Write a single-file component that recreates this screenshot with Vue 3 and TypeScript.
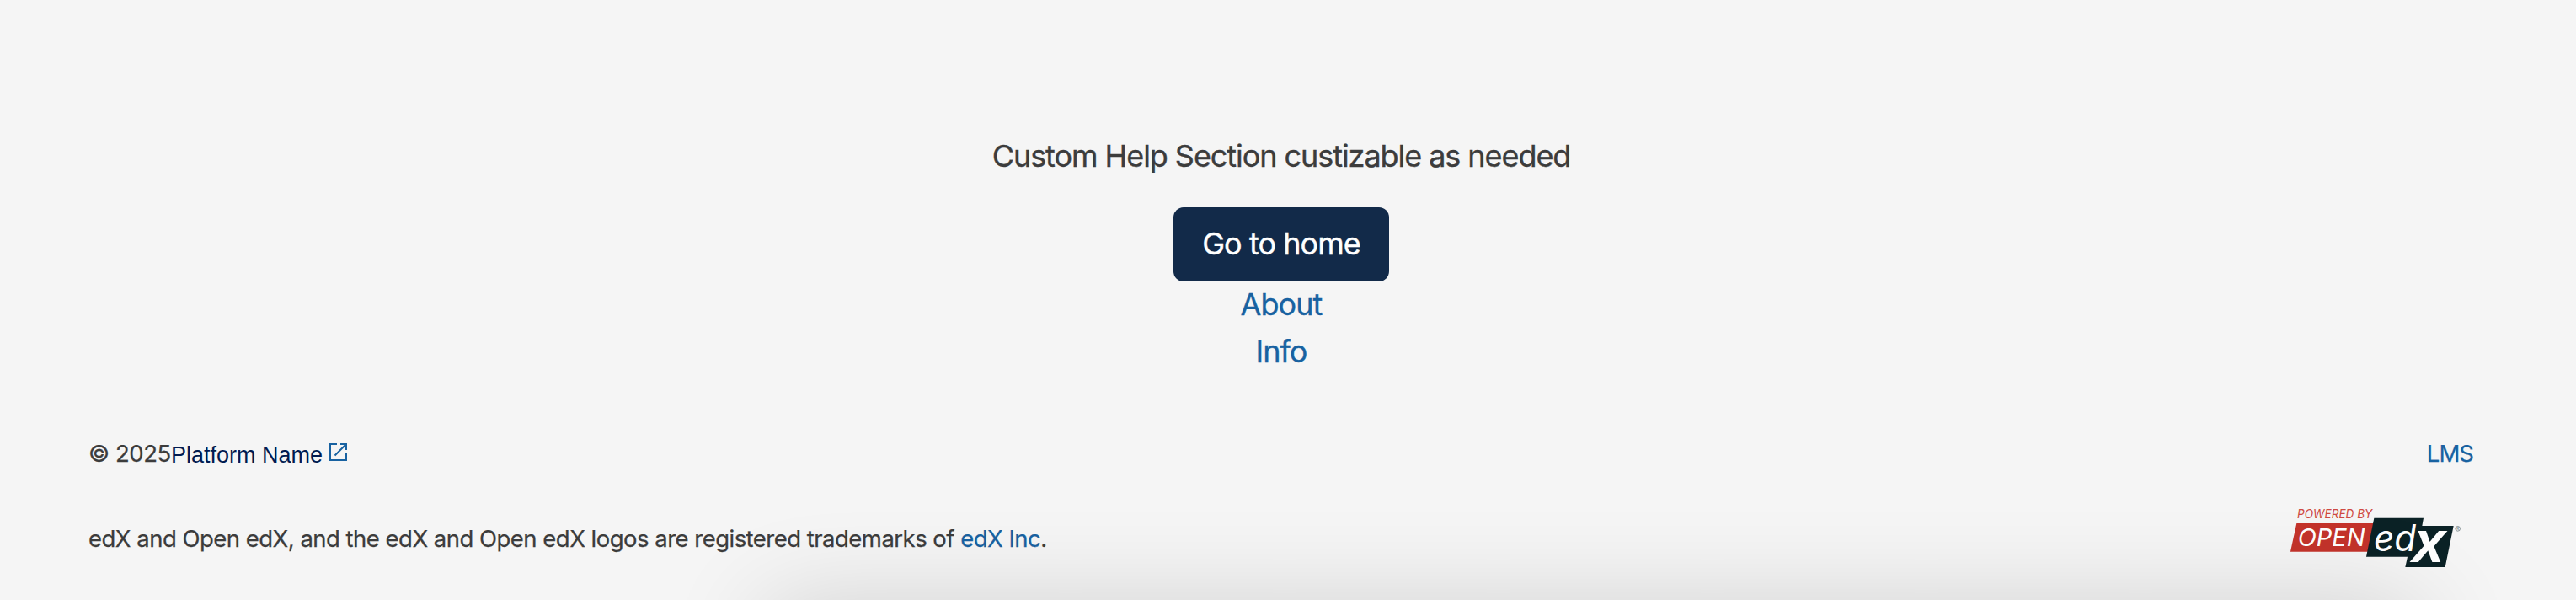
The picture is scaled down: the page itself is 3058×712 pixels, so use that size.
<script setup lang="ts">
const year = 2025
const helpLinks: string[] = ['About', 'Info']
</script>

<template>
  <div class="page">
    <section class="help">
      <p class="intro"><span>Custom Help Section custizable as needed</span></p>
      <a class="button"><span>Go to home</span></a>
      <a v-for="link in helpLinks" :key="link" class="help-link">{{ link }}</a>
    </section>
    <footer class="footer">
      <div class="row site">
        <div class="copyright">
          <span class="year">© {{ year }}</span>
          <a class="platform">Platform Name</a>
          <svg class="external" viewBox="0 0 21 21" aria-hidden="true">
            <path d="M9 1H1V20H20V12M13 1H20V8M19.5 1.5L6.5 14.5" />
          </svg>
        </div>
        <a class="lms">LMS</a>
      </div>
      <div class="row legal">
        <p class="trademark">edX and Open edX, and the edX and Open edX logos are registered trademarks of <a>edX Inc</a>.</p>
        <svg class="logo" viewBox="57 39 609 216" aria-label="Powered by Open edX">
          <text x="81" y="81" textLength="268" lengthAdjust="spacingAndGlyphs" class="powered">POWERED BY</text>
          <path d="M79 99H355L334 200H57Z" fill="#c4332b" />
          <path d="M355 80H531L526 108H638L608 255H466L474 218H327Z" fill="#0b2226" />
          <text x="83" y="181" textLength="240" lengthAdjust="spacingAndGlyphs" class="open">OPEN</text>
          <text x="354" y="198" textLength="150" lengthAdjust="spacingAndGlyphs" class="ed">ed</text>
          <text x="492" y="237" textLength="110" lengthAdjust="spacingAndGlyphs" class="x">X</text>
          <circle cx="653" cy="118" r="8.5" fill="none" stroke="#53646a" stroke-width="2" />
          <text x="648.5" y="123" class="mark">R</text>
        </svg>
      </div>
    </footer>
    <div class="shade"></div>
  </div>
</template>

<style>
body {
  margin: 0;
  background: #f5f5f5;
}
</style>

<style scoped>
.page {
  position: relative;
  box-sizing: border-box;
  width: 100%;
  height: 712px;
  padding-top: 157px;
  overflow: hidden;
  background: #f5f5f5;
  color: #3c3c3c;
  font-family: Inter, "Liberation Sans", sans-serif;
}
p {
  margin: 0;
}
a {
  color: #1862a1;
  text-decoration: none;
}
.help {
  display: flex;
  flex-direction: column;
  align-items: center;
  width: 3042px;
  font-size: 36px;
  line-height: 56px;
  -webkit-text-stroke-width: 0.35px;
}
.intro {
  letter-spacing: -1.06px;
}
.button {
  box-sizing: border-box;
  width: 256px;
  height: 88px;
  margin: 33px 0 -1px;
  border-radius: 12px;
  background: #122a49;
  color: #fff;
  text-align: center;
  line-height: 87px;
  letter-spacing: -0.95px;
}
.help-link {
  letter-spacing: -0.95px;
}
.footer {
  padding: 0 122px 0 105px;
  font-size: 27.5px;
  line-height: 40px;
}
.row {
  display: flex;
  justify-content: space-between;
}
.site {
  height: 40px;
  margin-top: 73px;
}
.copyright {
  display: flex;
}
.year {
  flex: none;
  width: 98px;
  white-space: nowrap;
  letter-spacing: -0.45px;
  -webkit-text-stroke-width: 0.25px;
}
.platform {
  width: 188px;
  padding-top: 2px;
  color: #001a50;
  font-family: "Liberation Sans", sans-serif;
  font-size: 27px;
}
.external {
  width: 21px;
  height: 21px;
  margin-top: 8px;
  fill: none;
  stroke: #1862a1;
  stroke-width: 2;
}
.lms {
  letter-spacing: -0.95px;
  -webkit-text-stroke-width: 0.25px;
}
.legal {
  align-items: flex-start;
  padding-top: 43px;
}
.trademark {
  padding-top: 18px;
  letter-spacing: -0.52px;
  -webkit-text-stroke-width: 0.25px;
}
.logo {
  width: 203px;
  height: 72px;
  margin-right: 14px;
  overflow: visible;
}
.powered {
  fill: #cf4a42;
  font-size: 42px;
  font-style: italic;
}
.open {
  fill: #fff;
  font-size: 87px;
  font-style: italic;
}
.ed {
  fill: #fff;
  font-size: 131px;
  font-style: italic;
}
.x {
  fill: #fff;
  font-family: "Open Sans", sans-serif;
  font-size: 155px;
  font-style: italic;
  font-weight: 700;
}
.mark {
  fill: #53646a;
  font-size: 13px;
}
.shade {
  position: absolute;
  top: 720px;
  left: 910px;
  width: 1960px;
  height: 200px;
  box-shadow: 0 0 120px rgba(0, 0, 0, 0.16);
}
</style>
